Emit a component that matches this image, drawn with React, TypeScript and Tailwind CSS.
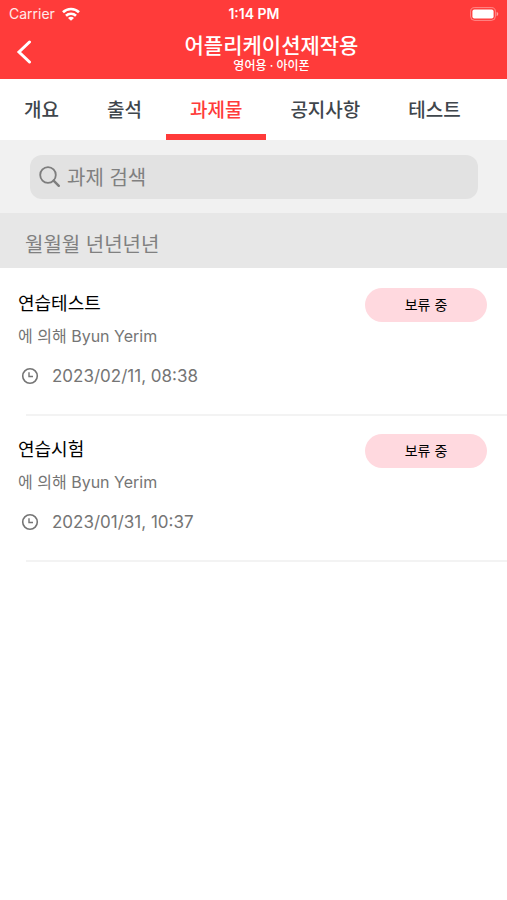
import { useState } from "react";

type Assignment = {
  id: string;
  title: string;
  author: string;
  dueAt: string;
  status: string;
};

const tabs = ["개요", "출석", "과제물", "공지사항", "테스트"];

const assignments: Assignment[] = [
  { id: "a1", title: "연습테스트", author: "Byun Yerim", dueAt: "2023/02/11, 08:38", status: "보류 중" },
  { id: "a2", title: "연습시험", author: "Byun Yerim", dueAt: "2023/01/31, 10:37", status: "보류 중" },
];

function WifiIcon() {
  return (
    <svg viewBox="0 0 18 14" className="h-[14px] w-[18px]" fill="none" stroke="currentColor" strokeWidth="2.6" aria-hidden="true">
      <path d="M1 5.2C5.4.9 12.6.9 17 5.2" />
      <path d="M4 8.7c2.8-2.7 7.2-2.7 10 0" />
      <path d="M9 13.8 6 10.9c1.7-1.5 4.3-1.5 6 0z" fill="currentColor" stroke="none" />
    </svg>
  );
}

function BatteryIcon() {
  return (
    <svg viewBox="0 0 30 14" className="h-[14px] w-[30px]" fill="none" aria-hidden="true">
      <rect x="1.6" y="0.6" width="24.8" height="12.8" rx="4" stroke="white" strokeOpacity="0.4" />
      <rect x="3.4" y="2.6" width="21.2" height="8.8" rx="2" fill="white" />
      <path d="M27.6 4.8c2.2.8 2.2 3.6 0 4.4z" fill="white" fillOpacity="0.5" />
    </svg>
  );
}

function ClockIcon() {
  return (
    <svg viewBox="0 0 18 18" className="size-[18px] shrink-0 text-[#757575]" fill="none" stroke="currentColor" aria-hidden="true">
      <circle cx="9" cy="9" r="7.3" strokeWidth="1.6" />
      <path d="M8 5.2v4.3h4" strokeWidth="1.4" />
    </svg>
  );
}

function SearchIcon() {
  return (
    <svg viewBox="0 0 22 22" className="size-[22px] shrink-0 text-[#7d7d7d]" fill="none" stroke="currentColor" aria-hidden="true">
      <circle cx="9" cy="9" r="7.8" strokeWidth="1.8" />
      <path d="m14.6 14.6 5.2 5.2" strokeWidth="2.4" strokeLinecap="round" />
    </svg>
  );
}

function Header() {
  return (
    <header className="bg-[#ff3b3a] text-white">
      <div className="grid h-7 grid-cols-3 items-center pr-2 pl-[9px] text-sm leading-5">
        <div className="flex items-center gap-[7px]">
          <span className="text-white/90">Carrier</span>
          <WifiIcon />
        </div>
        <span className="text-center font-semibold">1:14 PM</span>
        <div className="flex justify-end">
          <BatteryIcon />
        </div>
      </div>
      <div className="grid h-[51px] grid-cols-[48px_1fr_12px]">
        <button type="button" aria-label="뒤로" className="flex items-center pb-1 pl-4">
          <svg viewBox="0 0 16 24" className="h-6 w-4" fill="none" stroke="currentColor" strokeWidth="3" strokeLinecap="round" aria-hidden="true">
            <path d="M13.5 2 3 12l10.5 10" />
          </svg>
        </button>
        <div className="pt-[5px] text-center">
          <h1 className="text-[21px] leading-[26px] font-medium">어플리케이션제작용</h1>
          <p className="text-xs leading-[14px] font-medium">영어용 · 아이폰</p>
        </div>
      </div>
    </header>
  );
}

function AssignmentRow({ assignment }: { assignment: Assignment }) {
  return (
    <li className="pt-[18px]">
      <div className="flex items-start justify-between pr-5 pl-[18px]">
        <div>
          <h3 className="text-[18px] leading-8 text-black">{assignment.title}</h3>
          <p className="text-base leading-8 text-[#757575]">에 의해 {assignment.author}</p>
          <div className="mt-2 flex items-center gap-[13px] pl-[3px]">
            <ClockIcon />
            <time className="text-[17px] leading-8 text-[#757575]">{assignment.dueAt}</time>
          </div>
        </div>
        <span className="w-[122px] rounded-full bg-[#ffd9df] text-center text-sm leading-[34px] text-black">
          {assignment.status}
        </span>
      </div>
      <div className="mt-[22px] ml-[26px] border-b-2 border-[#f3f3f3]" />
    </li>
  );
}

export default function App() {
  const [activeTab, setActiveTab] = useState("과제물");
  const [query, setQuery] = useState("");

  const visible = assignments.filter((item) => item.title.includes(query.trim()));

  return (
    <div className="min-h-screen bg-white font-['Inter','Noto_Sans_CJK_KR',sans-serif]">
      <Header />

      <nav className="flex h-[61px] overflow-hidden">
        {tabs.map((tab) => (
          <button
            key={tab}
            type="button"
            onClick={() => setActiveTab(tab)}
            className={
              tab === activeTab
                ? "shrink-0 border-b-[6px] border-[#ff3b3a] px-6 pt-2 text-[19px] leading-7 font-medium text-[#ff3b3a]"
                : "shrink-0 border-b-[6px] border-transparent px-6 pt-2 text-[19px] leading-7 font-medium text-[#3f464c]"
            }
          >
            {tab}
          </button>
        ))}
      </nav>

      <main>
        <div className="bg-[#f1f1f1] pt-[15px] pr-[29px] pb-[14px] pl-[30px]">
          <label className="flex h-11 items-center gap-[6px] rounded-xl bg-[#e2e2e2] pr-3 pl-[9px]">
            <SearchIcon />
            <input
              type="text"
              aria-label="과제 검색"
              placeholder="과제 검색"
              value={query}
              onChange={(event) => setQuery(event.target.value)}
              className="min-w-0 flex-1 bg-transparent pt-0.5 text-xl text-[#333333] outline-none placeholder:text-[#808080]"
            />
          </label>
        </div>

        <h2 className="bg-[#e7e7e7] px-[25px] pt-4 pb-[7px] text-xl leading-8 text-[#808080]">월월월 년년년년</h2>

        <ul className="pt-0.5">
          {visible.map((assignment) => (
            <AssignmentRow key={assignment.id} assignment={assignment} />
          ))}
        </ul>
      </main>
    </div>
  );
}
